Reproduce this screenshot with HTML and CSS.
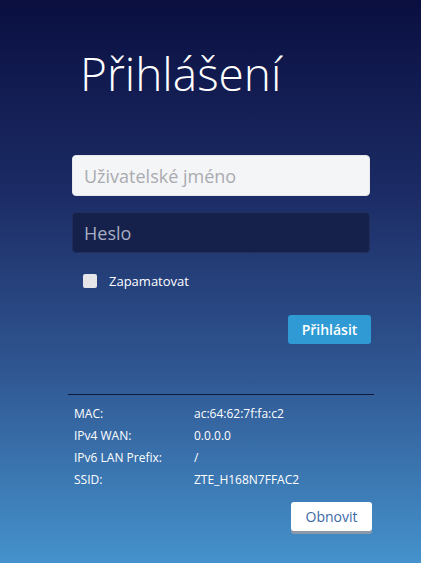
FILE: index.html
```html
<!DOCTYPE html>
<html lang="cs">
<head>
    <meta charset="UTF-8">
    <meta name="viewport" content="width=device-width, initial-scale=1.0">
    <title>Přihlášení</title>
    <link rel="stylesheet" href="styles.css">
</head>
<body>

<div class="login">
    <h1 class="title">Přihlášení</h1>

    <form class="login-form">
        <input type="text" class="field field-user" placeholder="Uživatelské jméno">
        <input type="password" class="field field-pass" placeholder="Heslo">
        <label class="remember">
            <span class="check"></span>
            Zapamatovat
        </label>
        <div class="actions">
            <button type="button" class="btn-login">Přihlásit</button>
        </div>
    </form>

    <div class="divider"></div>

    <div class="info">
        <div class="info-row"><span class="info-label">MAC:</span><span>ac:64:62:7f:fa:c2</span></div>
        <div class="info-row"><span class="info-label">IPv4 WAN:</span><span>0.0.0.0</span></div>
        <div class="info-row"><span class="info-label">IPv6 LAN Prefix:</span><span>/</span></div>
        <div class="info-row"><span class="info-label">SSID:</span><span>ZTE_H168N7FFAC2</span></div>
    </div>
    <div class="actions">
        <button type="button" class="btn-refresh">Obnovit</button>
    </div>
</div>

</body>
</html>
```

FILE: styles.css
```css
html, body {
    margin: 0;
    padding: 0;
    height: 100%;
}

body {
    font-family: "Open Sans", Arial, sans-serif;
    color: #fff;
    background: linear-gradient(to bottom, #0a0f40 0%, #1c2c66 35%, #2f5590 65%, #4592cc 100%);
    overflow: hidden;
}

.login {
    width: 306px;
    margin-left: 68px;
    padding-top: 43px;
}

.title {
    margin: 0 0 0 12px;
    font-weight: 300;
    font-size: 46px;
    line-height: 60px;
    letter-spacing: 0;
}

.login-form {
    margin-top: 52px;
    padding: 0 3px 0 4px;
}

.field {
    display: block;
    box-sizing: border-box;
    width: 298px;
    height: 41px;
    padding: 0 11px;
    border-radius: 4px;
    font-family: "Open Sans", Arial, sans-serif;
    font-size: 18px;
    outline: none;
}

.field-user {
    background: #f4f5f7;
    border: 1px solid #e6e8ec;
    color: #333;
}

.field-user::placeholder {
    color: #a9abb0;
}

.field-pass {
    margin-top: 16px;
    background: #15214b;
    border: 1px solid #1f2e5c;
    color: #fff;
}

.field-pass::placeholder {
    color: #a7aec2;
}

.remember {
    display: flex;
    align-items: center;
    margin: 18px 0 0 11px;
    font-size: 13px;
    line-height: 20px;
}

.check {
    width: 14px;
    height: 14px;
    margin-right: 12px;
    background: #e6e6e8;
    border-radius: 2px;
}

.actions {
    display: flex;
    justify-content: flex-end;
}

.login-form .actions {
    margin-top: 24px;
}

.btn-login {
    width: 83px;
    height: 29px;
    background: #2f9ad3;
    color: #fff;
    border: none;
    border-radius: 3px;
    font-family: "Open Sans", Arial, sans-serif;
    font-size: 14px;
    font-weight: 600;
    cursor: pointer;
}

.divider {
    margin-top: 50px;
    height: 1px;
    background: #0e1a3a;
}

.info {
    margin-top: 8px;
    padding-left: 6px;
    font-size: 12px;
}

.info-row {
    display: flex;
    height: 22px;
    line-height: 22px;
}

.info-label {
    width: 120px;
}

.info + .actions {
    margin-top: 11px;
    padding-right: 2px;
}

.btn-refresh {
    width: 81px;
    height: 29px;
    background: #fff;
    color: #3a68a8;
    border: none;
    border-radius: 3px;
    box-shadow: 0 3px 0 #8c98a8;
    font-family: "Open Sans", Arial, sans-serif;
    font-size: 14px;
    cursor: pointer;
}
```
